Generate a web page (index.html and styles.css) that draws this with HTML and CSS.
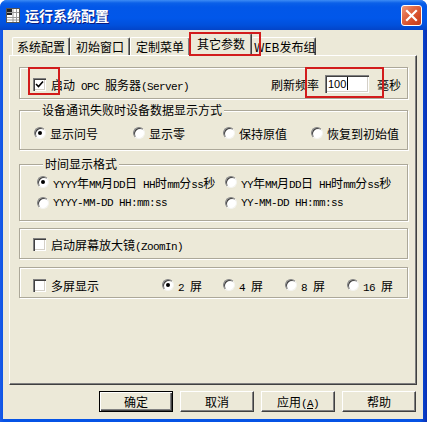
FILE: index.html
```html
<!DOCTYPE html>
<html lang="zh-CN">
<head>
    <meta charset="UTF-8">
    <title>运行系统配置</title>
    <link rel="stylesheet" href="styles.css">
</head>
<body>
<div class="window">
    <div class="titlebar">
        <svg class="app-icon" width="14" height="15" viewBox="0 0 14 15">
            <rect x="0.5" y="0.5" width="13" height="14" fill="#fff" stroke="#555"/>
            <rect x="1" y="1" width="5" height="6" fill="#222"/>
            <path d="M1 9.5H13M1 12H13M7 1V14M10.5 1V14M1 4.5H13" stroke="#9a9a9a" stroke-width="1"/>
        </svg>
        <span class="title">运行系统配置</span>
        <div class="close-btn">
            <svg width="21" height="21" viewBox="0 0 21 21">
                <path d="M6 6L15 15M15 6L6 15" stroke="#fff" stroke-width="2.2" stroke-linecap="square"/>
            </svg>
        </div>
    </div>

    <div class="client">
        <div class="tabs">
            <div class="tab t1">系统配置</div>
            <div class="tab t2">初始窗口</div>
            <div class="tab t3">定制菜单</div>
            <div class="tab active">其它参数</div>
            <div class="tab t5">WEB发布组</div>
        </div>

        <div class="panel">
            <div class="group opc">
                <div class="row">
                    <div class="check"><span class="box checked"><svg width="9" height="9" viewBox="0 0 9 9"><path d="M1 4L3.5 6.5L8 1.5" fill="none" stroke="#000" stroke-width="1.6"/></svg></span><span class="label">启动<span class="en"> OPC </span>服务器<span class="en">(Server)</span></span></div>
                    <div class="refresh">
                        <span>刷新频率</span>
                        <div class="edit">100<span class="caret"></span></div>
                        <span>毫秒</span>
                    </div>
                </div>
            </div>

            <div class="group g-comm">
                <div class="group-title">设备通讯失败时设备数据显示方式</div>
                <div class="row">
                    <div class="opt w99"><span class="radio on"></span><span class="label">显示问号</span></div>
                    <div class="opt w90"><span class="radio"></span><span class="label">显示零</span></div>
                    <div class="opt w88"><span class="radio"></span><span class="label">保持原值</span></div>
                    <div class="opt"><span class="radio"></span><span class="label">恢复到初始值</span></div>
                </div>
            </div>

            <div class="group g-time">
                <div class="group-title">时间显示格式</div>
                <div class="row">
                    <div class="opt w188"><span class="radio on"></span><span class="label"><span class="en">YYYY</span>年<span class="en">MM</span>月<span class="en">DD</span>日<span class="en"> HH</span>时<span class="en">mm</span>分<span class="en">ss</span>秒</span></div>
                    <div class="opt"><span class="radio"></span><span class="label"><span class="en">YY</span>年<span class="en">MM</span>月<span class="en">DD</span>日<span class="en"> HH</span>时<span class="en">mm</span>分<span class="en">ss</span>秒</span></div>
                </div>
                <div class="row row2">
                    <div class="opt w188"><span class="radio"></span><span class="label en">YYYY-MM-DD HH:mm:ss</span></div>
                    <div class="opt"><span class="radio"></span><span class="label en">YY-MM-DD HH:mm:ss</span></div>
                </div>
            </div>

            <div class="group g-zoom">
                <div class="row">
                    <div class="check"><span class="box"></span><span class="label">启动屏幕放大镜<span class="en">(ZoomIn)</span></span></div>
                </div>
            </div>

            <div class="group g-multi">
                <div class="row">
                    <div class="check w129"><span class="box"></span><span class="label">多屏显示</span></div>
                    <div class="opt w61"><span class="radio on"></span><span class="label"><span class="en">2 </span>屏</span></div>
                    <div class="opt w62"><span class="radio"></span><span class="label"><span class="en">4 </span>屏</span></div>
                    <div class="opt w62"><span class="radio"></span><span class="label"><span class="en">8 </span>屏</span></div>
                    <div class="opt"><span class="radio"></span><span class="label"><span class="en">16 </span>屏</span></div>
                </div>
            </div>
        </div>

        <div class="buttons">
            <button class="btn default">确定</button>
            <button class="btn">取消</button>
            <button class="btn">应用<span class="en">(<u>A</u>)</span></button>
            <button class="btn">帮助</button>
        </div>
    </div>

    <!-- red annotation boxes -->
    <div class="mark mark-tab"></div>
    <div class="mark mark-check"></div>
    <div class="mark mark-edit"></div>
</div>
</body>
</html>
```

FILE: styles.css
```css
body {
    margin: 0;
    font-family: "Noto Sans CJK SC", sans-serif;
    font-size: 12px;
    color: #000;
    background: #fff;
}
.window {
    position: relative;
    width: 427px;
    height: 422px;
    display: flex;
    flex-direction: column;
    border-radius: 7px 7px 0 0;
    overflow: hidden;
    background: linear-gradient(to right, #1c5ae6 0, #0553e6 4px, #0552e4 420px, #0a2fb3 427px);
}
.titlebar {
    height: 30px;
    display: flex;
    align-items: center;
    padding: 0 5px 0 6px;
    box-sizing: border-box;
    background: linear-gradient(#3d8cf5 0, #0b60e8 3px, #0257e8 7px, #0157ea 18px, #0150dc 25px, #0344c8 30px);
}
.app-icon {
    margin-right: 5px;
}
.title {
    color: #fff;
    font-weight: bold;
    font-size: 14px;
    line-height: 16px;
    text-shadow: 1px 1px 0 #0a1a80;
}
.close-btn {
    margin-left: auto;
    width: 21px;
    height: 21px;
    box-sizing: border-box;
    border: 1px solid #fff;
    border-radius: 3px;
    background: linear-gradient(135deg, #f09a7c 0, #e26a46 35%, #d44a26 70%, #c23d1e 100%);
    display: flex;
}
.close-btn svg {
    margin: -1px;
}
.client {
    flex: 1;
    margin: 0 4px 3px 3px;
    padding: 3px 6px 0 6px;
    background: #ece9d8;
    display: flex;
    flex-direction: column;
}
.tabs {
    display: flex;
    align-items: flex-end;
    height: 22px;
    padding-left: 3px;
}
.tab {
    height: 18px;
    box-sizing: border-box;
    border-top: 1px solid #fff;
    border-left: 1px solid #fff;
    border-right: 1px solid #404040;
    box-shadow: inset -1px 0 0 #808080;
    border-radius: 2px 2px 0 0;
    background: #ece9d8;
    text-align: center;
    line-height: 17px;
    white-space: nowrap;
    overflow: hidden;
}
.t1 { width: 58px; }
.t2 { width: 60px; }
.t3 { width: 60px; }
.t5 { width: 64px; border-left: none; padding-left: 2px; }
.tab.active {
    width: 62px;
    height: 23px;
    margin-bottom: -1px;
    position: relative;
    z-index: 1;
    line-height: 20px;
}
.panel {
    height: 330px;
    box-sizing: border-box;
    border: 1px solid;
    border-color: #fff #404040 #404040 #fff;
    box-shadow: inset -1px -1px 0 #808080;
    padding: 11px 10px 0 9px;
}
.group {
    width: 389px;
    box-sizing: border-box;
    border: 1px solid #aca899;
    box-shadow: inset 1px 1px 0 #fff, 1px 1px 0 #fff;
}
.group-title {
    width: fit-content;
    margin: -8px 0 0 6px;
    padding: 0 2px;
    background: #ece9d8;
    line-height: 14px;
    position: relative;
}
.row {
    display: flex;
    align-items: center;
    height: 16px;
    white-space: nowrap;
}
.label {
    white-space: pre;
}
.en {
    font-family: "Liberation Mono", monospace;
    font-size: 11px;
    letter-spacing: -0.6px;
    white-space: pre;
}
.opc {
    height: 32px;
    padding: 7px 6px 0 13px;
}
.opc .row {
    height: 18px;
}
.refresh {
    margin-left: auto;
    display: flex;
    align-items: center;
}
.edit {
    width: 44px;
    height: 18px;
    box-sizing: border-box;
    margin: 0 8px 0 6px;
    padding: 2px 0 0 3px;
    background: #fff;
    box-shadow: inset 1px 1px 0 #808080, inset 2px 2px 0 #404040, inset -1px -1px 0 #fff, inset -2px -2px 0 #d4d0c8;
    font-family: "Liberation Sans", sans-serif;
    font-size: 11px;
    line-height: 14px;
    display: flex;
    align-items: flex-start;
}
.caret {
    width: 1px;
    height: 13px;
    background: #000;
    margin-left: 1px;
}
.g-comm {
    margin-top: 11px;
    height: 40px;
    padding-left: 14px;
}
.g-comm .row {
    margin-top: 8px;
}
.g-time {
    margin-top: 14px;
    height: 57px;
    padding-left: 17px;
}
.g-time .row {
    margin-top: 3px;
}
.g-time .row2 {
    margin-top: 5px;
}
.g-zoom {
    margin-top: 7px;
    height: 31px;
    padding: 7px 0 0 13px;
}
.g-multi {
    margin-top: 8px;
    height: 31px;
    padding: 9px 0 0 13px;
}
.check, .opt {
    display: flex;
    align-items: center;
}
.w99 { width: 99px; }
.w90 { width: 90px; }
.w88 { width: 88px; }
.w188 { width: 188px; }
.w129 { width: 129px; }
.w61 { width: 61px; }
.w62 { width: 62px; }
.box {
    width: 13px;
    height: 13px;
    margin-right: 5px;
    flex-shrink: 0;
    background: #fff;
    box-shadow: inset 1px 1px 0 #808080, inset 2px 2px 0 #404040, inset -1px -1px 0 #fff, inset -2px -2px 0 #d4d0c8;
    display: flex;
    align-items: center;
    justify-content: center;
}
.radio {
    width: 12px;
    height: 12px;
    margin-right: 4px;
    flex-shrink: 0;
    box-sizing: border-box;
    border-radius: 50%;
    background: #fff;
    border: 1px solid;
    border-color: #808080 #f4f4f0 #f4f4f0 #808080;
    box-shadow: inset 1px 1px 0 #404040;
    display: flex;
    align-items: center;
    justify-content: center;
}
.radio.on::after {
    content: "";
    width: 4px;
    height: 4px;
    border-radius: 50%;
    background: #000;
}
.buttons {
    display: flex;
    justify-content: flex-end;
    gap: 7px;
    margin-top: 6px;
    padding-right: 1px;
}
.btn {
    width: 74px;
    height: 21px;
    padding: 0;
    font-family: "Noto Sans CJK SC", sans-serif;
    font-size: 12px;
    color: #000;
    background: #ece9d8;
    border: 1px solid;
    border-color: #fff #404040 #404040 #fff;
    box-shadow: inset -1px -1px 0 #808080;
}
.btn.default {
    border-color: #000;
    box-shadow: inset 1px 1px 0 #fff, inset -1px -1px 0 #404040, inset -2px -2px 0 #808080;
}
.mark {
    position: absolute;
    border: 2px solid #d21c1c;
    box-sizing: border-box;
    z-index: 5;
}
.mark-tab {
    left: 189px;
    top: 32px;
    width: 72px;
    height: 24px;
}
.mark-check {
    left: 28px;
    top: 67px;
    width: 32px;
    height: 28px;
}
.mark-edit {
    left: 305px;
    top: 67px;
    width: 79px;
    height: 31px;
}
```
